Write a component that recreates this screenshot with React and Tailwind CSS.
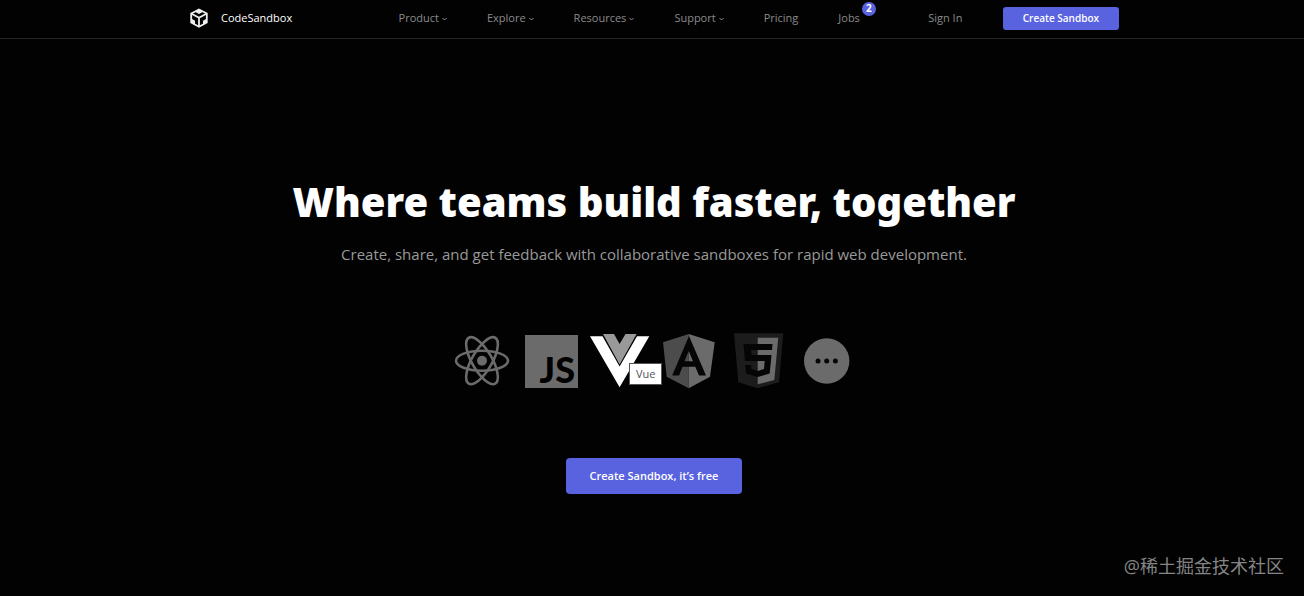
const NAV = [
  { label: 'Product', menu: true },
  { label: 'Explore', menu: true },
  { label: 'Resources', menu: true },
  { label: 'Support', menu: true },
  { label: 'Pricing' },
  { label: 'Jobs', count: 2 },
]

const TEMPLATES = [
  { name: 'React', Icon: ReactIcon },
  { name: 'JavaScript', Icon: JsIcon },
  { name: 'Vue', Icon: VueIcon, active: true },
  { name: 'Angular', Icon: AngularIcon },
  { name: 'CSS', Icon: CssIcon },
  { name: 'More', Icon: MoreIcon },
]

export default function App() {
  return (
    <div className="flex min-h-screen flex-col bg-[#020202] font-['Open_Sans','Noto_Sans_CJK_SC',sans-serif] text-white">
      <Header />
      <main className="flex flex-1 flex-col items-center pt-[135px] pl-1">
        <h1 className="font-['Noto_Sans',sans-serif] text-[40px] leading-14 font-black">
          Where teams build faster, together
        </h1>
        <p className="mt-2 text-[15px] leading-8 text-[#999]">
          Create, share, and get feedback with collaborative sandboxes for rapid web development.
        </p>
        <ul className="mt-[61px] flex">
          {TEMPLATES.map((t) => (
            <Template key={t.name} {...t} />
          ))}
        </ul>
        <button className="mt-[67px] h-9 rounded-sm bg-[#5962df] px-6 text-[11px] font-semibold">
          Create Sandbox, it’s free
        </button>
      </main>
      <footer className="px-5 pb-4 text-right text-lg leading-7 text-[#858585]">@稀土掘金技术社区</footer>
    </div>
  )
}

function Header() {
  return (
    <header className="border-b border-[#262626] pl-1">
      <div className="mx-auto flex h-[38px] max-w-[930px] items-center justify-between pb-0.5 text-[11px]">
        <a href="#" className="flex items-center gap-3 font-medium">
          <LogoIcon />
          CodeSandbox
        </a>
        <nav className="ml-[66px] flex items-center gap-10 text-[#8a8a8a]">
          {NAV.map(({ label, menu, count }) => (
            <a key={label} href="#" className="relative flex items-center gap-[3px]">
              {label}
              {menu && <Chevron />}
              {count && (
                <span className="absolute -top-2 left-full ml-0.5 flex size-[14px] items-center justify-center rounded-full bg-[#5962df] text-[10px] font-bold text-white">
                  {count}
                </span>
              )}
            </a>
          ))}
        </nav>
        <a href="#" className="ml-7 text-[#8a8a8a]">Sign In</a>
        <button className="h-[23px] rounded-[3px] bg-[#5962df] px-5 text-[10px] font-semibold">Create Sandbox</button>
      </div>
    </header>
  )
}

function Template({ name, Icon, active }) {
  return (
    <li className="relative">
      <button aria-label={name} className="block">
        <Icon />
      </button>
      {active && (
        <span className="absolute top-8 left-11 z-10 border border-[#555] bg-white px-1.5 text-[11px] leading-5 text-[#555]">
          {name}
        </span>
      )}
    </li>
  )
}

function Chevron() {
  return (
    <svg width="5" height="5" viewBox="0 0 5 5" fill="none" stroke="currentColor">
      <path d="M0.5 2 2.5 4 4.5 2" />
    </svg>
  )
}

function LogoIcon() {
  return (
    <svg width="20" height="20" viewBox="0 0 20 20" fill="none" stroke="#eee" strokeWidth="1.8">
      <path d="M10 1.5 17.8 5.5V14.5L10 18.8 2.2 14.5V5.5Z" />
      <path d="M2.2 5.5 10 9.8 17.8 5.5M10 9.8V18.5" />
      <path d="M10 1 14.5 3.5 10 6 5.5 3.5ZM2.2 10.5 6 12.8V17L2.2 14.5ZM17.8 10.5 14 12.8V17L17.8 14.5Z" fill="#eee" stroke="none" />
    </svg>
  )
}

function ReactIcon() {
  return (
    <svg width="69" height="60" viewBox="0 0 69 60" fill="none" stroke="#6b6b6b" strokeWidth="2.6">
      <circle cx="35" cy="29.7" r="5" fill="#6b6b6b" stroke="none" />
      <ellipse cx="35" cy="29.7" rx="26" ry="10" />
      <ellipse cx="35" cy="29.7" rx="26.5" ry="10" transform="rotate(60 35 29.7)" />
      <ellipse cx="35" cy="29.7" rx="26.5" ry="10" transform="rotate(120 35 29.7)" />
    </svg>
  )
}

function JsIcon() {
  return (
    <svg width="69" height="60" viewBox="0 0 69 60">
      <path d="M9 4H62V57H9Z" fill="#6b6b6b" />
      <text x="59" y="52" textAnchor="end" className="fill-black font-['Lato',sans-serif] text-[36px] font-black">
        JS
      </text>
    </svg>
  )
}

function VueIcon() {
  return (
    <svg width="69" height="60" viewBox="0 0 69 60">
      <path d="M5 5.3H17.5L34.6 35.5 52 5.3H64.3L34.6 56.3Z" fill="#fff" />
      <path d="M18 3H29L34.6 13 40.5 3H51.6L34.6 33.5Z" fill="#999" />
    </svg>
  )
}

function AngularIcon() {
  return (
    <svg width="69" height="60" viewBox="0 0 69 60">
      <path d="M34.7 3 9 11.3 12.7 45.7 34.7 57.3Z" fill="#4c4c4c" />
      <path d="M34.7 3 60.7 11.3 56 45.7 34.7 57.3Z" fill="#6b6b6b" />
      <path
        d="M35 5 18.2 44.5H25L28.5 35.8H41.3L45 44.5H52ZM34.7 20 39 30.3H30.5Z"
        fill="#050505"
        fillRule="evenodd"
      />
    </svg>
  )
}

function CssIcon() {
  return (
    <svg width="69" height="60" viewBox="0 0 69 60">
      <path d="M11 2.3H60.3L56 51.3 34.7 57.3 15.3 51.3Z" fill="#1c1c1c" />
      <path d="M34.7 6.7H55.3L51.3 49 34.7 53.3Z" fill="#6b6b6b" />
      <path
        d="M20.5 13H49.5L49 19H28L28.5 24H48.5L46.7 42.5 34.7 46 23 42.5 22.3 34H28L28.4 38 34.7 40 41 38 41.7 30H22Z"
        fill="#050505"
      />
    </svg>
  )
}

function MoreIcon() {
  return (
    <svg width="69" height="60" viewBox="0 0 69 60" fill="#050505">
      <circle cx="34.7" cy="30" r="22.7" fill="#6b6b6b" />
      <circle cx="26" cy="30" r="2.5" />
      <circle cx="34.7" cy="30" r="2.5" />
      <circle cx="43.4" cy="30" r="2.5" />
    </svg>
  )
}
